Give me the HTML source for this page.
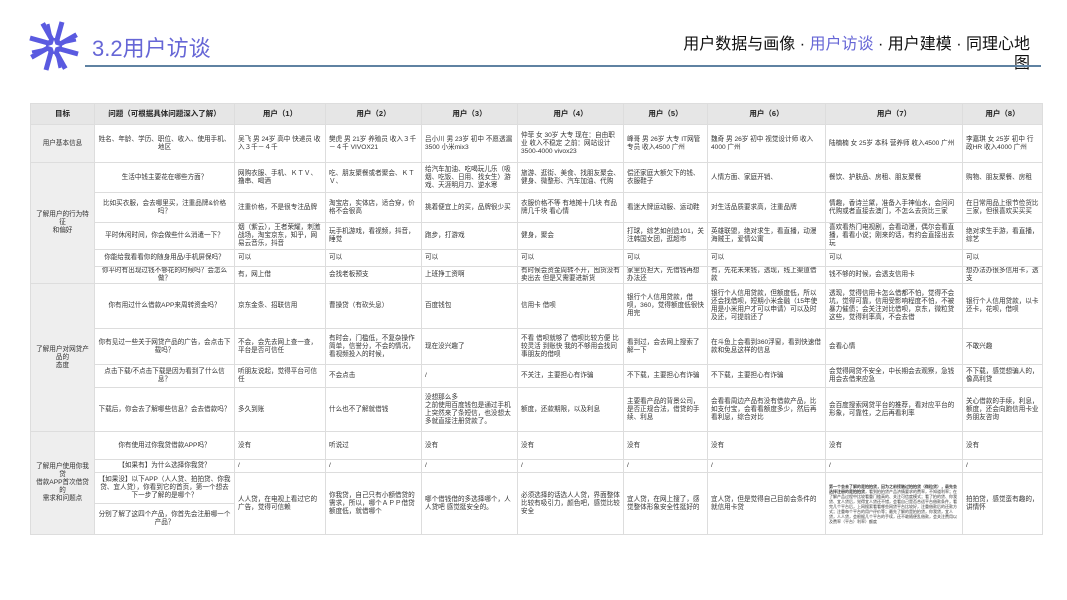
<!DOCTYPE html>
<html><head><meta charset="utf-8"><style>
body{margin:0;width:1067px;height:600px;background:#fff;position:relative;overflow:hidden;font-family:"Liberation Sans","Noto Sans CJK SC",sans-serif;}
.title{position:absolute;left:92px;top:31px;font-size:22px;color:#6666d6;}
.nav{position:absolute;right:37px;top:35px;width:420px;text-align:right;font-size:16px;line-height:19px;color:#111;}
.nav .a{color:#6666d6}
.line{position:absolute;left:85px;top:65px;width:956px;height:2px;background:#5f82a2;}
table{position:absolute;left:30px;top:103px;border-collapse:collapse;table-layout:fixed;width:1012px;font-size:6.6px;line-height:8px;color:#333;}
td,th{border:1px solid #ddd;padding:0 3px;vertical-align:middle;overflow:hidden;}
th{background:#e6e6e6;height:20px;font-weight:bold;font-size:7.5px;color:#222;}
td.g{background:#eeeeee;text-align:center;}
td.q{text-align:center;}
</style></head><body>
<svg style="position:absolute;left:28px;top:20px" width="52" height="52" viewBox="0 0 52 52">
<g transform="translate(26,26)" stroke="#5a5ae0" stroke-width="5" stroke-linecap="butt">
<line x1="3" y1="-6" x2="8" y2="-24"/><line x1="3" y1="-6" x2="8" y2="-24" transform="rotate(45)"/>
<line x1="3" y1="-6" x2="8" y2="-24" transform="rotate(90)"/><line x1="3" y1="-6" x2="8" y2="-24" transform="rotate(135)"/>
<line x1="3" y1="-6" x2="8" y2="-24" transform="rotate(180)"/><line x1="3" y1="-6" x2="8" y2="-24" transform="rotate(225)"/>
<line x1="3" y1="-6" x2="8" y2="-24" transform="rotate(270)"/><line x1="3" y1="-6" x2="8" y2="-24" transform="rotate(315)"/>
<line x1="-3" y1="-8" x2="-6" y2="-22" stroke-width="3"/><line x1="-3" y1="-8" x2="-6" y2="-22" stroke-width="3" transform="rotate(90)"/>
<line x1="-3" y1="-8" x2="-6" y2="-22" stroke-width="3" transform="rotate(180)"/><line x1="-3" y1="-8" x2="-6" y2="-22" stroke-width="3" transform="rotate(270)"/>
<circle r="8" fill="#5a5ae0" stroke="none"/>
<polygon points="0,-6 1.5,-1.5 6,0 1.5,1.5 0,6 -1.5,1.5 -6,0 -1.5,-1.5" fill="#fff" stroke="none"/>
</g></svg>
<div class="title">3.2用户访谈</div>
<div class="nav">用户数据与画像 · <span class="a">用户访谈</span> · 用户建模 · 同理心地<br>图</div>
<div class="line"></div>
<table>
<colgroup><col style="width:64px"><col style="width:140px"><col style="width:91px"><col style="width:96px"><col style="width:96px"><col style="width:106px"><col style="width:84px"><col style="width:118px"><col style="width:137px"><col style="width:80px"></colgroup>
<tr><th>目标</th><th>问题（可根据具体问题深入了解）</th><th>用户（1）</th><th>用户（2）</th><th>用户（3）</th><th>用户（4）</th><th>用户（5）</th><th>用户（6）</th><th>用户（7）</th><th>用户（8）</th></tr>
<tr style="height:38px"><td class="g">用户基本信息</td><td class="q">姓名、年龄、学历、职位、收入、使用手机、地区</td><td>吴飞 男 24岁 高中 快递员 收入３千－４千</td><td>樊虎 男 21岁 养殖员 收入３千－４千 VIVOX21</td><td>吕小川 男 23岁 初中 不愿透漏 3500 小米mix3</td><td>仲菲 女 30岁 大专 现在：自由职业 收入不稳定 之前：网站设计 3500-4000 vivox23</td><td>峰哥 男 26岁 大专 IT网管专员 收入4500 广州</td><td>魏奇 男 26岁 初中 视觉设计师 收入4000 广州</td><td>陆楠楠 女 25岁 本科 营养师 收入4500 广州</td><td>李嘉琪 女 25岁 初中 行政HR 收入4000 广州</td></tr>
<tr style="height:30px"><td class="g" rowspan="5">了解用户的行为特征<br>和偏好</td><td class="q">生活中钱主要花在哪些方面？</td><td>网购衣服、手机、ＫＴＶ、撸串、喝酒</td><td>吃、朋友聚餐或者聚会、ＫＴＶ、</td><td>给汽车加油、吃喝玩儿乐（吸烟、吃饭、日用、找女生）游戏、天涯明月刀、逆水寒</td><td>旅游、逛街、美食、找朋友聚会、健身、微整形、汽车加油、代购</td><td>偿还家庭大额欠下的钱、衣服鞋子</td><td>人情方面、家庭开销、</td><td>餐饮、护肤品、房租、朋友聚餐</td><td>购物、朋友聚餐、房租</td></tr>
<tr style="height:30px"><td class="q">比如买衣服，会去哪里买，注重品牌&amp;价格吗？</td><td>注重价格，不是很专注品牌</td><td>淘宝店，实体店，适合穿，价格不会很高</td><td>挑着便宜上的买，品牌很少买</td><td>衣服价格不等 有地摊十几块 有品牌几千块 看心情</td><td>看迷大牌运动服、运动鞋</td><td>对生活品质要求高，注重品牌</td><td>情趣，香诗兰黛，准备入手神仙水，会问问代购或者直接去澳门，不怎么去货比三家</td><td>在日常用品上很节俭货比三家，但很喜欢买买买</td></tr>
<tr style="height:27px"><td class="q">平时休闲时间，你会做些什么消遣一下？</td><td>烟（紫云），王者荣耀，刺激战场，淘宝京东，知乎，网易云音乐，抖音</td><td>玩手机游戏，看视频，抖音，睡觉</td><td>跑步，打游戏</td><td>健身，聚会</td><td>打球，综艺如创造101，关注韩国女团，逛超市</td><td>英雄联盟，绝对求生，看直播，动漫海贼王，爱情公寓</td><td>喜欢看热门电视剧，会看动漫，偶尔会看直播，看看小说；刚来的话，有约会直接出去玩</td><td>绝对求生手游，看直播，综艺</td></tr>
<tr style="height:17px"><td class="q">你能给我看看你的随身用品/手机屏保吗？</td><td>可以</td><td>可以</td><td>可以</td><td>可以</td><td>可以</td><td>可以</td><td>可以</td><td>可以</td></tr>
<tr style="height:17px"><td class="q">你平时有出现过钱不够花的时候吗？会怎么做？</td><td>有，网上借</td><td>会找老板预支</td><td>上班挣工资啊</td><td>有时候会资金周转不开，囤货没有卖出去 但是又需要进新货</td><td>家里负担大，先借钱再想办法还</td><td>有，先花未来钱，透现，线上渠道借款</td><td>钱不够的时候，会透支信用卡</td><td>想办法办很多信用卡，透支</td></tr>
<tr style="height:45px"><td class="g" rowspan="4">了解用户对网贷产品的<br>态度</td><td class="q">你有用过什么借款APP来周转资金吗？</td><td>京东金条、招联信用</td><td>曹操贷（有砍头息）</td><td>百度钱包</td><td>信用卡 借呗</td><td>银行个人信用贷款，借呗，360，觉得额度低很快用完</td><td>银行个人信用贷款，但额度低，所以还会找借呗，短期小米金融（15年使用是小米用户才可以申请）可以及时及还，可提前还了</td><td>透现，觉得信用卡怎么借都不怕，觉得不会坑，觉得可靠，信用受影响程度不怕，不被暴力催债；会关注对比借呗，京东，微粒贷这些，觉得利率高，不会去借</td><td>银行个人信用贷款，以卡还卡，花呗，借呗</td></tr>
<tr style="height:36px"><td class="q">你有见过一些关于网贷产品的广告，会点击下载吗？</td><td>不会，会先去网上查一查，平台是否可信任</td><td>有时会，门槛低，不复杂操作简单，信誉分，不会的情况，看视频投入的时候，</td><td>现在没兴趣了</td><td>不看 借呗就够了 借呗比较方便 比较灵活 到账快 我的不够用会找同事朋友的借呗</td><td>看到过，会去网上搜索了解一下</td><td>在斗鱼上会看到360浮窗，看到快速借款和免息这样的信息</td><td>会看心情</td><td>不敢兴趣</td></tr>
<tr style="height:23px"><td class="q">点击下载/不点击下载是因为看到了什么信息？</td><td>听朋友说起，觉得平台可信任</td><td>不会点击</td><td>/</td><td>不关注，主要担心有诈骗</td><td>不下载，主要担心有诈骗</td><td>不下载，主要担心有诈骗</td><td>会觉得网贷不安全，中长期会去观察，急钱用会去借来应急</td><td>不下载，感觉想骗人的，像高利贷</td></tr>
<tr style="height:44px"><td class="q">下载后，你会去了解哪些信息？会去借款吗？</td><td>多久到账</td><td>什么也不了解就借钱</td><td>没想那么多<br>之前使用百度钱包是通过手机上突然来了条短信，也没想太多就直接注册贷款了。</td><td>额度，还款期限，以及利息</td><td>主要看产品的背景公司，是否正规合法，借贷的手续、利息</td><td>会看看周边产品有没有借款产品，比如支付宝，会看看额度多少，然后再看利息，综合对比</td><td>会百度搜索网贷平台的推荐，看对应平台的形象，可靠性，之后再看利率</td><td>关心借款的手续，利息，额度，还会向跑信用卡业务朋友咨询</td></tr>
<tr style="height:28px"><td class="g" rowspan="4">了解用户使用你我贷<br>借款APP首次借贷的<br>需求和问题点</td><td class="q">你有使用过你我贷借款APP吗？</td><td>没有</td><td>听说过</td><td>没有</td><td>没有</td><td>没有</td><td>没有</td><td>没有</td><td>没有</td></tr>
<tr style="height:13px"><td class="q">【如果有】为什么选择你我贷？</td><td>/</td><td>/</td><td>/</td><td>/</td><td>/</td><td>/</td><td>/</td><td>/</td></tr>
<tr style="height:31px"><td class="q">【如果没】以下APP（人人贷、拍拍贷、你我贷、宜人贷），你看到它的首页，第一个想去下一步了解的是哪个？</td><td rowspan="2">人人贷，在电视上看过它的广告，觉得可信赖</td><td rowspan="2">你我贷，自己只有小额借贷的需求，所以，哪个ＡＰＰ借贷额度低，就借哪个</td><td rowspan="2">哪个借钱借的多选择哪个，人人贷吧 感觉挺安全的。</td><td rowspan="2">必须选择的话选人人贷，界面整体比较有吸引力，颜色吧，感觉比较安全</td><td rowspan="2">宜人贷，在网上搜了，感觉整体形象安全性挺好的</td><td rowspan="2">宜人贷，但是觉得自己目前会条件的就信用卡贷</td><td rowspan="2" style="font-size:4px;line-height:5px"><b>第一个会去了解的是拍拍贷，因为之前接触过拍拍贷（微粒贷），最先会选择注册的是拍拍贷</b>，看到拍拍贷产品济情要求的费率，不知道利率；在了解产品过程中比较看重门槛高的、关注可信度模式；看了拍的贷、你我贷、宜人贷后，觉得宜人贷还不错，会看自己是否合适平台借款条件，看完几个平台后，上网搜索看看哪些网贷平台比较好，注重借款后的还款方式；注重每个平台的用户评价等；最先了解的是拍拍贷，你我贷，宜人贷，人人贷，会根据几个平台的手续，还不敢随便乱借款，会关注费用以及费率（平台）利率）额度</td><td rowspan="2">拍拍贷，感觉蛮有趣的，讲情怀</td></tr>
<tr style="height:31px"><td class="q">分别了解了这四个产品，你首先会注册哪一个产品？</td></tr>
</table>
</body></html>
